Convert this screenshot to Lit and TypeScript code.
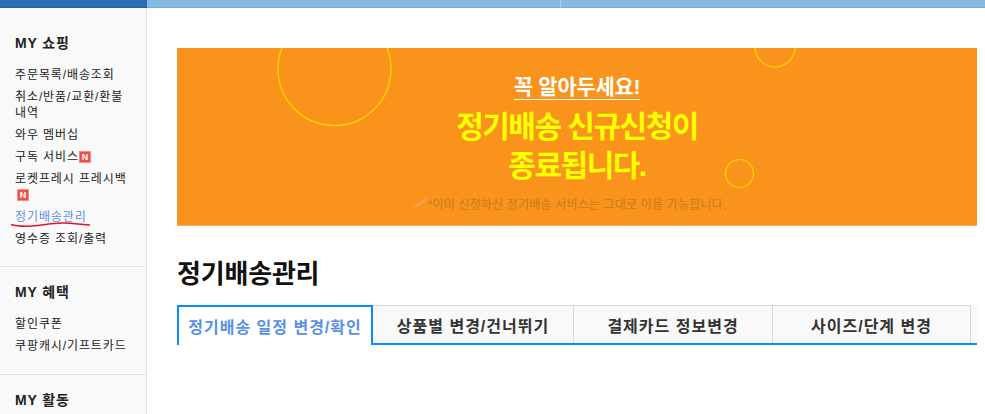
import { LitElement, html, css } from "lit";
import { customElement } from "lit/decorators.js";

@customElement("side-menu")
class SideMenu extends LitElement {
  static styles = css`
    :host {
      display: block;
      width: 146px;
      flex: none;
      background: #f9f9f9;
      border-right: 1px solid #e4e4e4;
      overflow: hidden;
    }
    section {
      padding: 17px 15px 14px;
      border-bottom: 1px solid #e4e4e4;
    }
    section:first-child {
      padding: 27px 15px 13px;
    }
    section:last-child {
      border-bottom: 0;
    }
    h3 {
      margin: 0 0 16px;
      font-size: 14px;
      line-height: 16px;
      font-weight: 700;
      letter-spacing: 0.9px;
      color: #222;
    }
    ul {
      list-style: none;
      margin: 0;
      padding: 0;
    }
    li {
      font-size: 12px;
      line-height: 16px;
      letter-spacing: 0.9px;
      padding-bottom: 6px;
      color: #222;
    }
    li.on {
      color: #5b8fe8;
    }
    .new {
      display: inline-block;
      box-sizing: border-box;
      width: 12px;
      height: 12px;
      vertical-align: top;
      margin-top: 2px;
      background: #ef4f4a;
      border: 1px solid #f58a86;
      color: #fff;
      font-size: 9px;
      line-height: 10px;
      font-weight: 700;
      letter-spacing: 0;
      text-align: center;
    }
    .wrap .new {
      margin-left: 2px;
    }
  `;

  render() {
    const n = html`<span class="new">N</span>`;
    return html`
      <section>
        <h3>MY 쇼핑</h3>
        <ul>
          <li>주문목록/배송조회</li>
          <li>취소/반품/교환/환불<br />내역</li>
          <li>와우 멤버십</li>
          <li>구독 서비스${n}</li>
          <li class="wrap">로켓프레시 프레시백<br />${n}</li>
          <li class="on">정기배송관리</li>
          <li>영수증 조회/출력</li>
        </ul>
      </section>
      <section>
        <h3>MY 혜택</h3>
        <ul>
          <li>할인쿠폰</li>
          <li>쿠팡캐시/기프트카드</li>
        </ul>
      </section>
      <section>
        <h3>MY 활동</h3>
      </section>
    `;
  }
}

@customElement("notice-banner")
class NoticeBanner extends LitElement {
  static styles = css`
    :host {
      display: flex;
      flex-direction: column;
      align-items: center;
      box-sizing: border-box;
      position: relative;
      height: 178px;
      padding-top: 26px;
      background: #f9931c;
      overflow: hidden;
      border-bottom: 1px solid #fbb25e;
    }
    .kicker {
      font-size: 21px;
      line-height: 25px;
      font-weight: 700;
      letter-spacing: -0.3px;
      color: #fff;
      border-bottom: 1px solid #fff;
    }
    .title {
      margin-top: 7px;
      font-size: 30px;
      line-height: 39px;
      font-weight: 700;
      letter-spacing: -1.5px;
      text-align: center;
      color: #ffff00;
    }
    .note {
      margin-top: 12px;
      font-size: 12px;
      line-height: 16px;
      letter-spacing: 0.18px;
      color: #c47c24;
    }
    svg {
      position: absolute;
      left: 0;
      top: 0;
    }
  `;

  render() {
    return html`
      <svg width="800" height="177" fill="none" stroke="#ffd800" stroke-width="1.2">
        <circle cx="157.5" cy="21" r="56.5" />
        <circle cx="598" cy="-1" r="20" />
        <circle cx="562.5" cy="125.5" r="14" />
        <path d="M232 162l19-15 -5 9z" fill="#f0a04a" stroke="none" />
      </svg>
      <div class="kicker">꼭 알아두세요!</div>
      <div class="title">정기배송 신규신청이<br />종료됩니다.</div>
      <div class="note">*이미 신청하신 정기배송 서비스는 그대로 이용 가능합니다.</div>
    `;
  }
}

@customElement("app-root")
export class AppRoot extends LitElement {
  static styles = css`
    :host {
      display: block;
      width: 985px;
      height: 414px;
      overflow: hidden;
      position: relative;
      background: #fff;
      font-family: "Liberation Sans", "Noto Sans CJK KR", sans-serif;
    }
    .top {
      display: flex;
      height: 8px;
      background: #84bae3;
      box-shadow: inset 0 -1px 0 #78aed8;
    }
    .top .a {
      width: 147px;
      background: #2a6db3;
      box-shadow: inset 0 -1px 0 #2663a4;
    }
    .top .b {
      width: 413px;
      border-right: 1px solid #a5cdeb;
    }
    .body {
      display: flex;
      height: 406px;
    }
    main {
      flex: 1;
      padding: 40px 8px 0 30px;
      min-width: 0;
    }
    h1 {
      margin: 31px 0 0;
      font-size: 26px;
      line-height: 34px;
      font-weight: 700;
      letter-spacing: -0.2px;
      color: #111;
    }
    .tabs {
      display: flex;
      margin-top: 14px;
      height: 40px;
      box-sizing: border-box;
      border-bottom: 2px solid #0b8cfa;
    }
    .tab {
      box-sizing: border-box;
      width: 199px;
      height: 38px;
      display: flex;
      align-items: center;
      justify-content: center;
      background: #f9f9f9;
      border: 1px solid #d8d8d8;
      border-left: 0;
      border-bottom: 0;
      font-size: 16px;
      font-weight: 700;
      letter-spacing: 1px;
      color: #333;
    }
    .tab:nth-child(2) {
      width: 201px;
    }
    .tab:nth-child(4) {
      width: 198px;
    }
    .tab.active {
      width: 196px;
      height: 40px;
      background: #fff;
      border: 2px solid #0b8cfa;
      border-bottom: 0;
      color: #5b8fe8;
    }
    .rest {
      flex: 1;
      height: 38px;
      background: #fafafa;
    }
    .scribble {
      position: absolute;
      left: 10px;
      top: 220px;
    }
  `;

  render() {
    return html`
      <div class="top"><div class="a"></div><div class="b"></div></div>
      <div class="body">
        <side-menu></side-menu>
        <main>
          <notice-banner></notice-banner>
          <h1>정기배송관리</h1>
          <div class="tabs">
            <div class="tab active">정기배송 일정 변경/확인</div>
            <div class="tab">상품별 변경/건너뛰기</div>
            <div class="tab">결제카드 정보변경</div>
            <div class="tab">사이즈/단계 변경</div>
            <div class="rest"></div>
          </div>
        </main>
      </div>
      <svg class="scribble" width="85" height="10" fill="none" stroke="#e8112d" stroke-width="1.5">
        <path d="M1 4.5C6 6 14 6.5 22 6C32 5.5 42 3 52 3C62 3 72 4.5 80 5" />
      </svg>
    `;
  }
}
